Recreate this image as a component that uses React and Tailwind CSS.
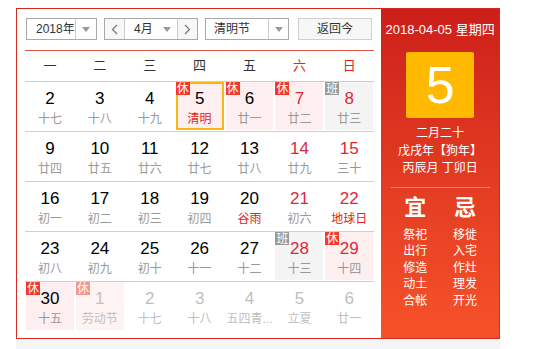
import React from 'react';

const FONT = "font-['Liberation_Sans','Noto_Sans_CJK_SC',sans-serif]";

// 日历数据：d 日期, l 农历/节日
const ROWS = [
  [
    { d: 2, l: '十七' },
    { d: 3, l: '十八' },
    { d: 4, l: '十九' },
    { d: 5, l: '清明', fest: true, rest: true, sel: true },
    { d: 6, l: '廿一', rest: true },
    { d: 7, l: '廿二', rest: true, we: true },
    { d: 8, l: '廿三', work: true, we: true },
  ],
  [
    { d: 9, l: '廿四' },
    { d: 10, l: '廿五' },
    { d: 11, l: '廿六' },
    { d: 12, l: '廿七' },
    { d: 13, l: '廿八' },
    { d: 14, l: '廿九', we: true },
    { d: 15, l: '三十', we: true },
  ],
  [
    { d: 16, l: '初一' },
    { d: 17, l: '初二' },
    { d: 18, l: '初三' },
    { d: 19, l: '初四' },
    { d: 20, l: '谷雨', fest: true },
    { d: 21, l: '初六', we: true },
    { d: 22, l: '地球日', fest: true, we: true },
  ],
  [
    { d: 23, l: '初八' },
    { d: 24, l: '初九' },
    { d: 25, l: '初十' },
    { d: 26, l: '十一' },
    { d: 27, l: '十二' },
    { d: 28, l: '十三', work: true, we: true },
    { d: 29, l: '十四', rest: true, we: true },
  ],
  [
    { d: 30, l: '十五', rest: true },
    { d: 1, l: '劳动节', rest: true, other: true },
    { d: 2, l: '十七', other: true },
    { d: 3, l: '十八', other: true },
    { d: 4, l: '五四青...', other: true },
    { d: 5, l: '立夏', other: true },
    { d: 6, l: '廿一', other: true },
  ],
];

const WEEK = ['一', '二', '三', '四', '五', '六', '日'];
const YI = ['祭祀', '出行', '修造', '动土', '合帐'];
const JI = ['移徙', '入宅', '作灶', '理发', '开光'];

const Caret = () => (
  <svg width="8" height="5" viewBox="0 0 8 5">
    <path d="M0 0h8L4 5z" fill="#999" />
  </svg>
);

const Chevron = ({ left }) => (
  <svg width="7" height="11" viewBox="0 0 7 11">
    <path d={left ? 'M6 1L1.5 5.5 6 10' : 'M1 1l4.5 4.5L1 10'} fill="none" stroke="#777" strokeWidth="1.2" />
  </svg>
);

const DayCell = ({ c }) => {
  let bg = '';
  if (c.rest) bg = c.other ? 'bg-[#fdf3f3]' : 'bg-[#fdefef]';
  if (c.work) bg = 'bg-[#f4f4f4]';

  let numColor = 'text-black';
  if (c.we) numColor = 'text-[#e0263a]';
  if (c.other) numColor = 'text-[#c0c0c0]';

  let lunarColor = 'text-[#999]';
  if (c.fest) lunarColor = 'text-[#e0241c]';
  if (c.other) lunarColor = 'text-[#c0c0c0]';

  return (
    <div
      className={`relative mx-[1px] h-[48px] flex flex-col items-center ${bg} ${
        c.sel ? 'border-2 border-[#fbb612]' : ''
      }`}
    >
      {(c.rest || c.work) && (
        <span
          className={`absolute ${c.sel ? '-left-[2px] -top-[2px]' : 'left-0 top-0'} w-[14px] h-[13px] flex items-center justify-center text-[12px] leading-none text-white ${
            c.work ? 'bg-[#999]' : c.other ? 'bg-[#f7958c]' : 'bg-[#f2392b]'
          }`}
        >
          {c.work ? '班' : '休'}
        </span>
      )}
      <div className={`${c.sel ? 'mt-[6px]' : 'mt-[8px]'} text-[17px] leading-[18px] ${numColor}`}>{c.d}</div>
      <div className={`mt-[2px] text-[12px] leading-[18px] whitespace-nowrap ${lunarColor}`}>{c.l}</div>
    </div>
  );
};

export default function App() {
  return (
    <div className={`${FONT} w-[543px] h-[349px] bg-white pt-[8px] pl-[16px]`}>
      <div className="w-[484px] h-[331px] flex border border-[#d42a1f]">
        {/* 左侧日历 */}
        <div className="w-[365px] pl-[8px] pr-[7px] pt-[9px]">
          <div className="flex items-center h-[22px] pl-[1px] text-[#333] whitespace-nowrap">
            <div className="w-[71px] h-[22px] flex border border-[#a9a9a9]">
              <div className="flex-1 flex items-center pl-[9px] text-[12px]">2018年</div>
              <div className="w-[21px] flex items-center justify-center border-l border-[#ccc]">
                <Caret />
              </div>
            </div>
            <div className="ml-[7px] w-[94px] h-[22px] flex border border-[#a9a9a9]">
              <div className="w-[20px] flex items-center justify-center bg-[#f7f7f7] border-r border-[#ccc]">
                <Chevron left />
              </div>
              <div className="flex-1 flex items-center pl-[9px] text-[12px]">
                <span className="flex-1">4月</span>
                <span className="mr-[6px] flex"><Caret /></span>
              </div>
              <div className="w-[20px] flex items-center justify-center bg-[#f7f7f7] border-l border-[#ccc]">
                <Chevron />
              </div>
            </div>
            <div className="ml-[7px] w-[84px] h-[22px] flex border border-[#a9a9a9]">
              <div className="flex-1 flex items-center pl-[8px] text-[12px]">清明节</div>
              <div className="w-[20px] flex items-center justify-center border-l border-[#ccc]">
                <Caret />
              </div>
            </div>
            <div className="ml-[9px] w-[74px] h-[22px] flex items-center justify-center bg-[#f7f7f7] border border-[#d0d0d0] text-[12px]">
              返回今
            </div>
          </div>

          <div className="mt-[10px] h-px bg-[#e5564a]" />

          <div className="grid grid-cols-7 h-[31px] border-b border-[#cfcfcf] text-[13px]">
            {WEEK.map((w, i) => (
              <div
                key={w}
                className={`flex items-center justify-center ${i >= 5 ? 'text-[#e0241c]' : 'text-[#333]'}`}
              >
                {w}
              </div>
            ))}
          </div>

          {ROWS.map((row, ri) => (
            <div
              key={ri}
              className={`grid grid-cols-7 h-[50px] ${ri < ROWS.length - 1 ? 'border-b border-[#cfcfcf]' : ''}`}
            >
              {row.map((c, ci) => (
                <DayCell key={ci} c={c} />
              ))}
            </div>
          ))}
        </div>

        {/* 右侧详情 */}
        <div className="w-[118px] bg-gradient-to-b from-[#cd1e1a] to-[#f5522a] text-white flex flex-col items-center pt-[12px]">
          <div className="text-[13px] leading-[18px] whitespace-nowrap">2018-04-05 星期四</div>
          <div className="mt-[13px] w-[68px] h-[66px] rounded-[2px] bg-[#ffb900] flex items-center justify-center text-[52px] leading-none">
            5
          </div>
          <div className="mt-[7px] text-[12px] leading-[17.5px] text-center whitespace-nowrap">
            <div>二月二十</div>
            <div>戊戌年【狗年】</div>
            <div>丙辰月 丁卯日</div>
          </div>
          <div className="mt-[9px] w-[99px] h-px bg-[#f3867a]" />
          <div className="mt-[9px] w-full px-[9px] grid grid-cols-2">
            <div className="flex flex-col items-center">
              <div className="text-[22px] leading-[22px] font-bold">宜</div>
              <div className="mt-[8px] text-[12px] leading-[16.5px] text-center">
                {YI.map((t) => (
                  <div key={t}>{t}</div>
                ))}
              </div>
            </div>
            <div className="flex flex-col items-center">
              <div className="text-[22px] leading-[22px] font-bold">忌</div>
              <div className="mt-[8px] text-[12px] leading-[16.5px] text-center">
                {JI.map((t) => (
                  <div key={t}>{t}</div>
                ))}
              </div>
            </div>
          </div>
        </div>
      </div>
      <div className="w-[484px] h-[10px] bg-[#f5f5f5]" />
    </div>
  );
}
